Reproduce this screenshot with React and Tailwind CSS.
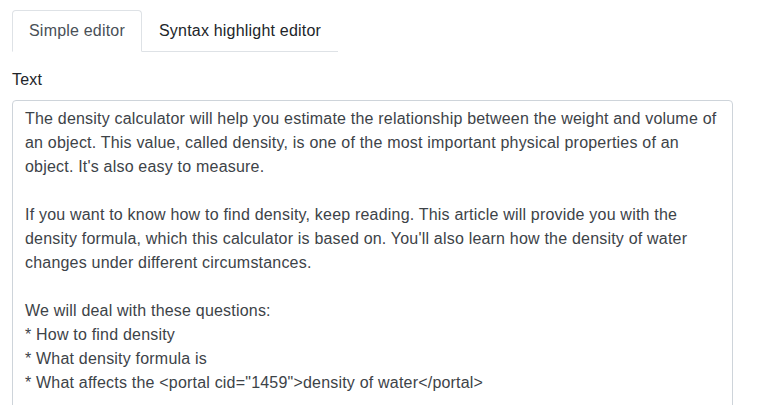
const content = `The density calculator will help you estimate the relationship between the weight and volume of an object. This value, called density, is one of the most important physical properties of an object. It's also easy to measure.

If you want to know how to find density, keep reading. This article will provide you with the density formula, which this calculator is based on. You'll also learn how the density of water changes under different circumstances.

We will deal with these questions:
* How to find density
* What density formula is
* What affects the <portal cid="1459">density of water</portal>`

const App = () => {
  return (
    <div className="min-h-screen bg-white px-3 pt-[10px] font-['Liberation_Sans',Arial,sans-serif] text-base leading-6 tracking-[0.2px]">
      <ul className="inline-flex border-b border-[#dee2e6]">
        <li className="-mb-px">
          <button className="block px-4 py-2 border border-[#dee2e6] border-b-white rounded-t bg-white text-[#495057] tracking-[0.2px]">
            Simple editor
          </button>
        </li>
        <li className="-mb-px">
          <button className="block px-4 py-2 border border-transparent rounded-t text-[#212529] tracking-[0.2px]">
            Syntax highlight editor
          </button>
        </li>
      </ul>

      <div className="mt-4">
        <label className="block mb-2 text-[#212529]">Text</label>
        <textarea
          readOnly
          defaultValue={content}
          className="block w-[721px] h-[400px] px-3 py-[6px] border border-[#ced4da] rounded bg-white text-[#3d4348] leading-6 tracking-[0.2px] resize-none outline-none overflow-hidden font-['Liberation_Sans',Arial,sans-serif]"
        />
      </div>
    </div>
  )
}

export default App
